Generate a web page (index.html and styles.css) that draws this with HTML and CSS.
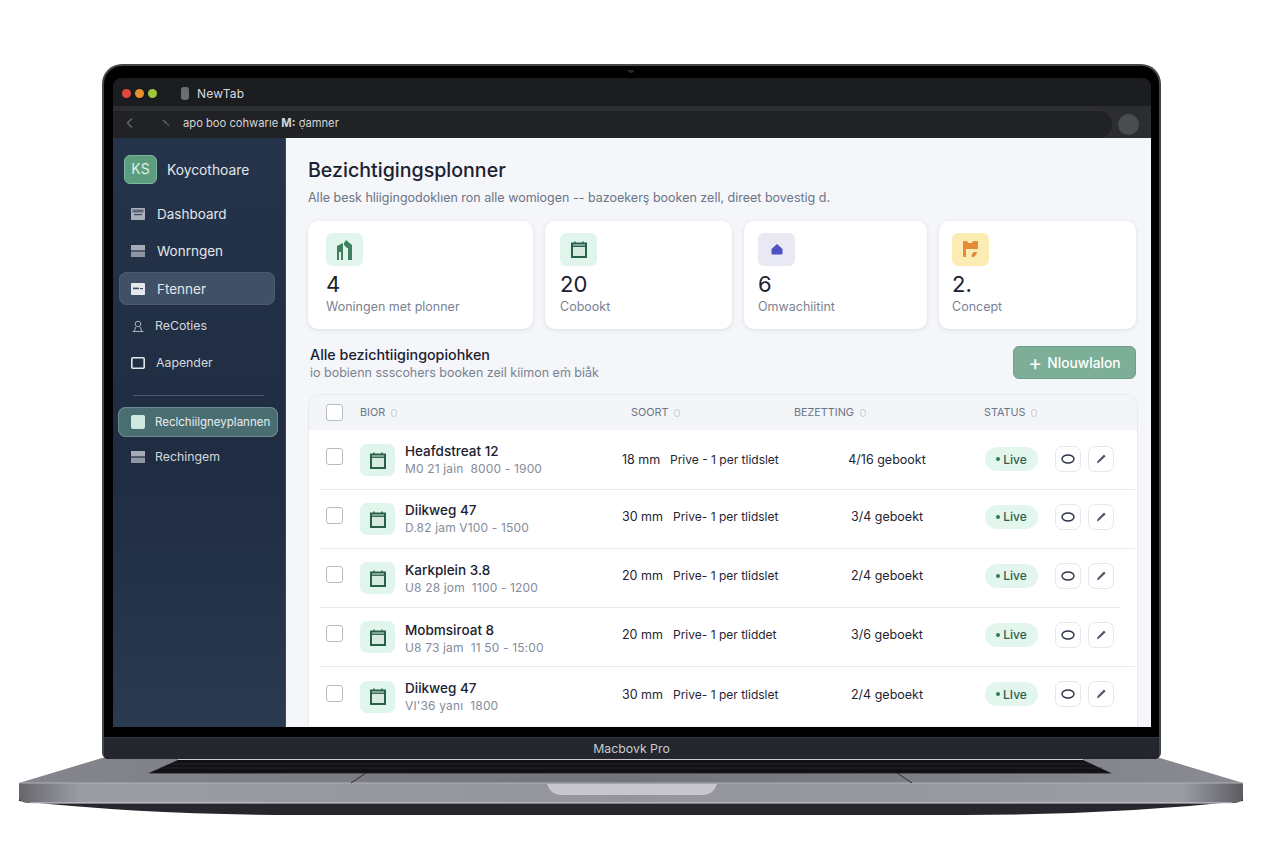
FILE: index.html
```html
<!DOCTYPE html>
<html lang="nl">
<head>
    <meta charset="UTF-8">
    <title>Bezichtigingsplonner</title>
    <link rel="stylesheet" href="styles.css">
</head>
<body>
    <div class="lid">
        <div class="notch"></div>
        <div class="screen">
            <div class="titlebar">
                <span class="dot dot-red"></span>
                <span class="dot dot-yellow"></span>
                <span class="dot dot-green"></span>
                <span class="tab-icon"></span>
                <span class="tab-title">NewTab</span>
            </div>
            <div class="urlbar">
                <div class="url-field">
                    <svg class="url-back" width="10" height="12" viewBox="0 0 10 12"><path d="M7 1.5 2.5 6 7 10.5" fill="none" stroke="#5f6368" stroke-width="1.6"/></svg>
                    <svg class="url-key" width="10" height="10" viewBox="0 0 10 10"><path d="M2 2 5 4.5 3.5 5.5M5 4.5 8 8" fill="none" stroke="#5f6368" stroke-width="1.1"/></svg>
                    <span>apo boo cohwarıe <b>M:</b> ợamner</span>
                </div>
                <span class="url-avatar"></span>
            </div>
            <div class="app">
                <aside class="sidebar">
                    <div class="brand">
                        <span class="brand-logo">KS</span>
                        <span class="brand-name">Koycothoare</span>
                    </div>
                    <nav class="nav">
                        <a class="nav-item nav-big"><svg class="nav-icon" viewBox="0 0 14 12"><rect width="14" height="12" rx="1" fill="#aab0ba"/><rect x="1.5" y="1.5" width="11" height="3" fill="#5d6675"/><rect x="3" y="6" width="8" height="1.2" fill="#39465a"/></svg>Dashboard</a>
                        <a class="nav-item nav-big"><svg class="nav-icon" viewBox="0 0 14 12"><rect width="14" height="5.4" fill="#a4abb6"/><rect y="6.6" width="14" height="5.4" fill="#8e96a3"/></svg>Wonrngen</a>
                        <a class="nav-item nav-big nav-active"><svg class="nav-icon" viewBox="0 0 14 12"><rect width="14" height="12" rx="1" fill="#e6e9ec"/><rect x="2" y="4.6" width="6" height="1.6" fill="#3f4e63"/><rect x="9" y="5" width="3" height="1.2" fill="#3f4e63"/></svg>Ftenner</a>
                        <a class="nav-item"><svg class="nav-icon" viewBox="0 0 14 12"><circle cx="7" cy="4" r="2.8" fill="none" stroke="#aab0ba"/><path d="M1.5 11.5h11M3.5 11 4.5 7M10.5 11l-1-4" fill="none" stroke="#aab0ba"/></svg>ReCoties</a>
                        <a class="nav-item nav-wide"><svg class="nav-icon" viewBox="0 0 14 12"><rect x=".8" y=".8" width="12.4" height="10.4" rx="1" fill="none" stroke="#e4e7eb" stroke-width="1.6"/></svg>Aapender</a>
                    </nav>
                    <div class="nav-divider"></div>
                    <nav class="nav nav-lower">
                        <a class="nav-item nav-current"><span class="nav-square"></span>Reclchiilgneyplannen</a>
                        <a class="nav-item"><svg class="nav-icon" viewBox="0 0 14 12"><rect width="14" height="5.4" fill="#a4abb6"/><rect y="6.6" width="14" height="5.4" fill="#8e96a3"/></svg>Rechingem</a>
                    </nav>
                </aside>
                <main class="main">
                    <h1>Bezichtigingsplonner</h1>
                    <p class="lead">Alle besk hliigingodoklıen ron alle womiogen -- bazoekerş booken zell, direet bovestig d.</p>

                    <section class="stats">
                        <div class="stat stat-a">
                            <span class="stat-icon icon-green"><svg width="17" height="20" viewBox="0 0 17 20"><path d="M1 6 7 3v17H5v-8H3v8H1z" fill="#3f8060"/><path d="M8 3 10 0l6 5v15h-4V8h-1l-3-3z" fill="#3f8060"/></svg></span>
                            <div class="stat-num">4</div>
                            <div class="stat-label">Woningen met plonner</div>
                        </div>
                        <div class="stat stat-b">
                            <span class="stat-icon icon-green"><svg width="16" height="17" viewBox="0 0 16 17"><use href="#cal"/></svg></span>
                            <div class="stat-num">20</div>
                            <div class="stat-label">Cobookt</div>
                        </div>
                        <div class="stat stat-c">
                            <span class="stat-icon icon-purple"><svg width="12" height="11" viewBox="0 0 12 11"><path d="M6 0 11.5 5v4.5q0 1-1 1h-9q-1 0-1-1V5z" fill="#4f52c4"/></svg></span>
                            <div class="stat-num">6</div>
                            <div class="stat-label">Omwachiitint</div>
                        </div>
                        <div class="stat stat-d">
                            <span class="stat-icon icon-yellow"><svg width="15" height="17" viewBox="0 0 15 17"><path d="M0 1q0-1 1-1h3l1 2h4l1-2h4q1 0 1 1v7H3v8H1q-1 0-1-1z" fill="#e68a35"/><path d="M9 16c-1-1 0-4 2-5l3 0c0 2-3 6-5 5z" fill="#dd8a3c"/></svg></span>
                            <div class="stat-num">2.</div>
                            <div class="stat-label">Concept</div>
                        </div>
                    </section>

                    <div class="list-head">
                        <div>
                            <h2>Alle bezichtiigingopiohken</h2>
                            <p class="list-sub">io bobienn ssscohers booken zeil kiimon em̉ biåk</p>
                        </div>
                        <button class="btn-new"><span class="btn-plus">+</span>Nlouwlalon</button>
                    </div>

                    <div class="table">
                        <div class="thead">
                            <span class="check"></span>
                            <span class="th th-bior">BIOR<i class="sort"></i></span>
                            <span class="th">SOORT<i class="sort"></i></span>
                            <span class="th">BEZETTING<i class="sort"></i></span>
                            <span class="th">STATUS<i class="sort"></i></span>
                        </div>

                        <div class="row row-1">
                            <span class="check"></span>
                            <span class="row-icon"><svg width="16" height="17" viewBox="0 0 16 17"><use href="#cal"/></svg></span>
                            <div class="row-name"><strong>Heafdstreat 12</strong><small>M0 21 jaìn &nbsp;8000 - 1900</small></div>
                            <span class="row-dur">18 mm</span>
                            <span class="row-type">Prive - 1 per tlidslet</span>
                            <span class="row-book">4/16 gebookt</span>
                            <span class="pill"><i></i>Live</span>
                            <span class="actions"><span class="act"><svg width="14" height="10" viewBox="0 0 14 10"><ellipse cx="7" cy="5" rx="6" ry="4" fill="none" stroke="#2c3448" stroke-width="1.4"/></svg></span><span class="act"><svg width="12" height="12" viewBox="0 0 12 12"><path d="M2 10.5 2.6 8 9 1.6 10.6 3.2 4 9.6z" fill="#4d566b"/></svg></span></span>
                        </div>
                        <div class="row row-2">
                            <span class="check"></span>
                            <span class="row-icon"><svg width="16" height="17" viewBox="0 0 16 17"><use href="#cal"/></svg></span>
                            <div class="row-name"><strong>Diikweg 47</strong><small>D.82 jam V100 - 1500</small></div>
                            <span class="row-dur">30 mm</span>
                            <span class="row-type">Prive- 1 per tlidslet</span>
                            <span class="row-book">3/4 geboekt</span>
                            <span class="pill"><i></i>Live</span>
                            <span class="actions"><span class="act"><svg width="14" height="10" viewBox="0 0 14 10"><ellipse cx="7" cy="5" rx="6" ry="4" fill="none" stroke="#2c3448" stroke-width="1.4"/></svg></span><span class="act"><svg width="12" height="12" viewBox="0 0 12 12"><path d="M2 10.5 2.6 8 9 1.6 10.6 3.2 4 9.6z" fill="#4d566b"/></svg></span></span>
                        </div>
                        <div class="row row-3">
                            <span class="check"></span>
                            <span class="row-icon"><svg width="16" height="17" viewBox="0 0 16 17"><use href="#cal"/></svg></span>
                            <div class="row-name"><strong>Karkplein 3.8</strong><small>U8 28 jom &nbsp;1100 - 1200</small></div>
                            <span class="row-dur">20 mm</span>
                            <span class="row-type">Prive- 1 per tlidslet</span>
                            <span class="row-book">2/4 geboekt</span>
                            <span class="pill"><i></i>Live</span>
                            <span class="actions"><span class="act"><svg width="14" height="10" viewBox="0 0 14 10"><ellipse cx="7" cy="5" rx="6" ry="4" fill="none" stroke="#2c3448" stroke-width="1.4"/></svg></span><span class="act"><svg width="12" height="12" viewBox="0 0 12 12"><path d="M2 10.5 2.6 8 9 1.6 10.6 3.2 4 9.6z" fill="#4d566b"/></svg></span></span>
                        </div>
                        <div class="row row-4">
                            <span class="check"></span>
                            <span class="row-icon"><svg width="16" height="17" viewBox="0 0 16 17"><use href="#cal"/></svg></span>
                            <div class="row-name"><strong>Mobmsiroat 8</strong><small>U8 73 jam &nbsp;11 50 - 15:00</small></div>
                            <span class="row-dur">20 mm</span>
                            <span class="row-type">Prive- 1 per tliddet</span>
                            <span class="row-book">3/6 geboekt</span>
                            <span class="pill"><i></i>Live</span>
                            <span class="actions"><span class="act"><svg width="14" height="10" viewBox="0 0 14 10"><ellipse cx="7" cy="5" rx="6" ry="4" fill="none" stroke="#2c3448" stroke-width="1.4"/></svg></span><span class="act"><svg width="12" height="12" viewBox="0 0 12 12"><path d="M2 10.5 2.6 8 9 1.6 10.6 3.2 4 9.6z" fill="#4d566b"/></svg></span></span>
                        </div>
                        <div class="row row-5">
                            <span class="check"></span>
                            <span class="row-icon"><svg width="16" height="17" viewBox="0 0 16 17"><use href="#cal"/></svg></span>
                            <div class="row-name"><strong>Diikweg 47</strong><small>VI'36 yanı &nbsp;1800</small></div>
                            <span class="row-dur">30 mm</span>
                            <span class="row-type">Prive- 1 per tlidslet</span>
                            <span class="row-book">2/4 geboekt</span>
                            <span class="pill"><i></i>LIve</span>
                            <span class="actions"><span class="act"><svg width="14" height="10" viewBox="0 0 14 10"><ellipse cx="7" cy="5" rx="6" ry="4" fill="none" stroke="#2c3448" stroke-width="1.4"/></svg></span><span class="act"><svg width="12" height="12" viewBox="0 0 12 12"><path d="M2 10.5 2.6 8 9 1.6 10.6 3.2 4 9.6z" fill="#4d566b"/></svg></span></span>
                        </div>
                    </div>
                </main>
            </div>
        </div>
        <div class="chin">Macbovk Pro</div>
    </div>

    <!-- laptop base -->
    <svg class="base" width="1264" height="57" viewBox="0 0 1264 57">
        <defs>
            <linearGradient id="deck" x1="0" y1="0" x2="1" y2="0">
                <stop offset="0" stop-color="#85858d"/>
                <stop offset=".5" stop-color="#74747c"/>
                <stop offset="1" stop-color="#8a8a92"/>
            </linearGradient>
            <linearGradient id="front" x1="0" y1="0" x2="1" y2="0">
                <stop offset="0" stop-color="#66666c"/>
                <stop offset=".05" stop-color="#9c9ca5"/>
                <stop offset=".5" stop-color="#94949e"/>
                <stop offset=".95" stop-color="#9c9ca5"/>
                <stop offset="1" stop-color="#5c5c62"/>
            </linearGradient>
        </defs>
        <path d="M19 43 Q150 57 300 57H964Q1110 57 1243 43V40H19z" fill="#26272c"/>
        <path d="M19 25H1243V40Q1243 43 1236 45H26Q19 43 19 40z" fill="url(#front)"/>
        <path d="M19 25 102 0H1160L1243 25z" fill="url(#deck)"/>
        <path d="M19 25H1243" stroke="#b0b0b8"/>
        <path d="M30 45H1232" stroke="#d6d6dc"/>
        <path d="M149 15 178 2H1083L1111 15z" fill="#111216"/>
        <path d="M178 1.5H1083" stroke="#c9c9cf"/>
        <path d="M149 15.5H1111" stroke="#55565c"/>
        <path d="M172 6H1092M160 10H1102" stroke="#2b2c31" stroke-width=".7"/>
        <path d="M351 25 366 15M912 25 897 15" stroke="#2c2d32"/>
        <path d="M547 26H717Q714 36 704 37H560Q550 36 547 26z" fill="#c7c7cd"/>
    </svg>

    <svg class="defs" width="0" height="0">
        <symbol id="cal" viewBox="0 0 16 17"><path d="M4 .5v2M12 .5v2" stroke="#28604c" stroke-width="1.4"/><rect x="1" y="2.5" width="14" height="13.5" fill="#d8ebe2" stroke="#28604c" stroke-width="2"/><path d="M1 5.2H15" stroke="#28604c" stroke-width="1.4"/></symbol>
    </svg>
</body>
</html>
```

FILE: styles.css
```css
* {
    box-sizing: border-box;
}
body {
    margin: 0;
    padding-top: 64px;
    background-color: white;
    font-family: Inter, "Liberation Sans", sans-serif;
    overflow: hidden;
}
h1, h2, p {
    margin: 0;
}

/* laptop shell */
.lid {
    position: relative;
    width: 1059px;
    height: 695px;
    margin-left: 102px;
    padding: 12px 10px 0 11px;
    background-color: black;
    border: 2px solid #45464b;
    border-bottom: none;
    border-radius: 20px 20px 6px 6px;
    display: flex;
    flex-direction: column;
}
.notch {
    position: absolute;
    top: 4px;
    left: 524px;
    width: 6px;
    height: 3px;
    border-radius: 0 0 3px 3px;
    background-color: #26272b;
}
.screen {
    width: 1038px;
    height: 649px;
    margin-left: -2px;
    border-radius: 8px 8px 0 0;
    overflow: hidden;
    display: flex;
    flex-direction: column;
}
.chin {
    margin: 10px -10px 0 -11px;
    height: 22px;
    flex: none;
    background-color: #23262c;
    border-top: 1px solid #33363c;
    border-radius: 0 0 6px 6px;
    color: #c9cbd0;
    font-size: 12.3px;
    line-height: 21px;
    text-align: center;
}
.base {
    display: block;
    margin-top: -1px;
}
.defs {
    position: absolute;
}

/* browser chrome */
.titlebar {
    height: 28px;
    flex: none;
    padding: 2px 0 0 9px;
    background-color: #1b1c20;
    display: flex;
    align-items: center;
}
.dot {
    width: 9px;
    height: 9px;
    border-radius: 50%;
    margin-right: 4px;
}
.dot-red { background-color: #e2483f; }
.dot-yellow { background-color: #e8912a; }
.dot-green { background-color: #9cc63c; }
.tab-icon {
    width: 8px;
    height: 13px;
    margin-left: 20px;
    border-radius: 3px;
    background-color: #6b6d70;
}
.tab-title {
    margin-left: 8px;
    color: #d9dadb;
    font-size: 12px;
    letter-spacing: .2px;
}
.urlbar {
    height: 32px;
    flex: none;
    padding-top: 5px;
    background-color: #2c2d30;
    display: flex;
    align-items: center;
}
.url-field {
    width: 999px;
    height: 27px;
    padding: 0 0 4px 12px;
    border-radius: 0 13px 13px 0;
    background-color: #212225;
    color: #d4d5d7;
    font-size: 11.2px;
    display: flex;
    align-items: center;
}
.url-back {
    flex: none;
}
.url-key {
    flex: none;
    margin-left: 26px;
    margin-right: 12px;
}
.url-avatar {
    width: 21px;
    height: 21px;
    margin-left: 6px;
    border-radius: 50%;
    background-color: #4a4c50;
}

/* app layout */
.app {
    flex: 1;
    display: flex;
    min-height: 0;
}
.sidebar {
    width: 173px;
    flex: none;
    padding: 17px 6px 0;
    background: linear-gradient(#25344a, #1f2c42 55%, #2a3a50);
    border-right: 1px solid #3a485c;
    color: #e3e6ea;
}
.brand {
    display: flex;
    align-items: center;
    padding-left: 5px;
    margin-bottom: 13px;
}
.brand-logo {
    width: 33px;
    height: 29px;
    border-radius: 6px;
    background-color: #5c9d80;
    border: 1px solid #7fb69d;
    color: #dff0e8;
    font-size: 14px;
    line-height: 26px;
    text-align: center;
}
.brand-name {
    margin-left: 10px;
    font-size: 13.8px;
}
.nav {
    display: flex;
    flex-direction: column;
    gap: 4px;
}
.nav-item {
    height: 33px;
    padding-left: 12px;
    border-radius: 8px;
    font-size: 12.3px;
    display: flex;
    align-items: center;
    color: #d5d9df;
}
.nav-big {
    font-size: 13.5px;
    color: #e3e6ea;
}
.nav-icon {
    width: 14px;
    height: 12px;
    margin-right: 10px;
    flex: none;
}
.nav-big .nav-icon {
    margin-right: 12px;
}
.nav-wide .nav-icon {
    margin-right: 11px;
}
.nav-active {
    margin-top: 1px;
    margin-right: 4px;
    background-color: #405066;
    box-shadow: inset 0 0 0 1px #4c5b70;
}
.nav-divider {
    height: 1px;
    margin: 16px 15px 11px 14px;
    background-color: #4b5970;
}
.nav-lower {
    gap: 3px;
}
.nav-current {
    height: 30px;
    margin: 0 1px 0 -1px;
    padding-left: 13px;
    font-size: 11.5px;
    background-color: #4a6d72;
    box-shadow: inset 0 0 0 1px #6a8a8d;
    color: #e6eeee;
}
.nav-square {
    width: 14px;
    height: 14px;
    margin-right: 10px;
    border-radius: 2px;
    background-color: #cfe8de;
}

/* main area */
.main {
    flex: 1;
    min-width: 0;
    padding: 20px 0 0 22px;
    background-color: #f4f6fa;
    overflow: hidden;
}
h1 {
    font-size: 19.6px;
    font-weight: 500;
    line-height: 24px;
    color: #1b2130;
}
.lead {
    margin-top: 8px;
    font-size: 12.5px;
    line-height: 16px;
    color: #6c7485;
}
.stats {
    display: grid;
    grid-template-columns: 225px 187px 183px 197px;
    gap: 12px;
    margin-top: 15px;
}
.stat {
    height: 108px;
    padding-top: 12px;
    background-color: white;
    border-radius: 10px;
    box-shadow: 0 1px 4px rgba(40, 50, 80, .12);
}
.stat-a { padding-left: 18px; }
.stat-b { padding-left: 15px; }
.stat-c { padding-left: 14px; }
.stat-d { padding-left: 13px; }
.stat-icon {
    width: 37px;
    height: 33px;
    border-radius: 6px;
    display: flex;
    align-items: center;
    justify-content: center;
}
.icon-green { background-color: #e1f5ec; }
.icon-purple { background-color: #e9e9f4; }
.icon-yellow { background-color: #fbecb4; }
.stat-num {
    margin-top: 6px;
    font-size: 22px;
    line-height: 24px;
    color: #1b2130;
}
.stat-label {
    margin-top: 3px;
    font-size: 12.5px;
    line-height: 16px;
    color: #7a8292;
}
.list-head {
    width: 828px;
    display: flex;
    justify-content: space-between;
    align-items: flex-start;
    margin-top: 17px;
    padding-left: 2px;
}
h2 {
    font-size: 14.3px;
    font-weight: 500;
    line-height: 17px;
    color: #1b2130;
}
.list-sub {
    margin-top: 2px;
    font-size: 12.5px;
    line-height: 16px;
    color: #7a8292;
}
.btn-new {
    width: 123px;
    height: 33px;
    padding: 0;
    border: 1px solid #6f9f8a;
    border-radius: 6px;
    background-color: #7dae98;
    color: white;
    font-family: inherit;
    font-size: 13.8px;
    font-weight: 500;
    display: flex;
    align-items: center;
    justify-content: center;
}
.btn-plus {
    margin-right: 5px;
    font-size: 21px;
    font-weight: 400;
    line-height: 1;
}

/* table */
.table {
    margin-top: 13px;
    width: 830px;
    background-color: white;
    border: 1px solid #e6e9ee;
    border-bottom: none;
    border-radius: 12px 12px 0 0;
}
.thead {
    height: 35px;
    background-color: #f3f5f8;
    border-radius: 12px 12px 0 0;
    display: grid;
    grid-template-columns: 17px 288px 163px 190px auto;
    align-items: center;
    padding-left: 17px;
}
.th {
    font-size: 10.8px;
    color: #6c7485;
    display: flex;
    align-items: center;
}
.th-bior { margin-left: 17px; }
.sort {
    width: 6px;
    height: 8px;
    margin-left: 6px;
    border: 1px solid #ccd1d9;
    border-radius: 50%;
}
.check {
    width: 17px;
    height: 17px;
    border: 1px solid #b5bcc6;
    border-radius: 3px;
    background-color: white;
}
.row {
    display: grid;
    grid-template-columns: 17px 52px 227px 48px 170px 94px 121px auto;
    justify-content: start;
    align-items: center;
    margin: 0 2px 0 11px;
    padding: 0 0 5px 6px;
    border-top: 1px solid #e8eaee;
    font-size: 12.5px;
    color: #1f2532;
}
.row-1 { height: 59px; padding-bottom: 1px; border-top: none; }
.row-2 { height: 59px; }
.row-3 { height: 59px; }
.row-4 { height: 59px; margin-right: 16px; }
.row-5 { height: 60px; margin-right: 2px; }
.row > .check { margin-bottom: 2px; }
.row-1 > .check { margin-bottom: 6px; }
.row-icon {
    width: 35px;
    height: 32px;
    margin: 5px 0 0 17px;
    border-radius: 7px;
    background-color: #e0f5eb;
    display: flex;
    align-items: center;
    justify-content: center;
}
.row-1 .row-icon { margin-top: 2px; }
.row-name {
    margin-top: 5px;
    padding-left: 10px;
    display: flex;
    flex-direction: column;
}
.row-1 .row-name { margin-top: 1px; }
.row-2 .row-name { margin-top: 3px; }
.row-4 .row-name { margin-top: 8px; }
.row-name strong {
    font-size: 13.5px;
    font-weight: 500;
    line-height: 17px;
    color: #1b2130;
}
.row-name small {
    margin-top: 1px;
    font-size: 12px;
    line-height: 15px;
    letter-spacing: .15px;
    color: #858c9a;
}
.row-type {
    margin-left: 3px;
    font-size: 12px;
}
.row-1 .row-type { margin-left: 0; }
.row-book { text-align: center; }
.pill {
    width: 53px;
    height: 24px;
    margin-left: 51px;
    border-radius: 12px;
    background-color: #e3f6ee;
    color: #2e5e4c;
    font-size: 12px;
    font-weight: 500;
    display: flex;
    align-items: center;
    justify-content: center;
}
.pill i {
    width: 4px;
    height: 4px;
    margin-right: 3px;
    border-radius: 50%;
    background-color: #2f7a5e;
}
.actions {
    display: flex;
    gap: 7px;
}
.act {
    width: 26px;
    height: 26px;
    border: 1px solid #e5e7eb;
    border-radius: 7px;
    background-color: white;
    display: flex;
    align-items: center;
    justify-content: center;
}
```
